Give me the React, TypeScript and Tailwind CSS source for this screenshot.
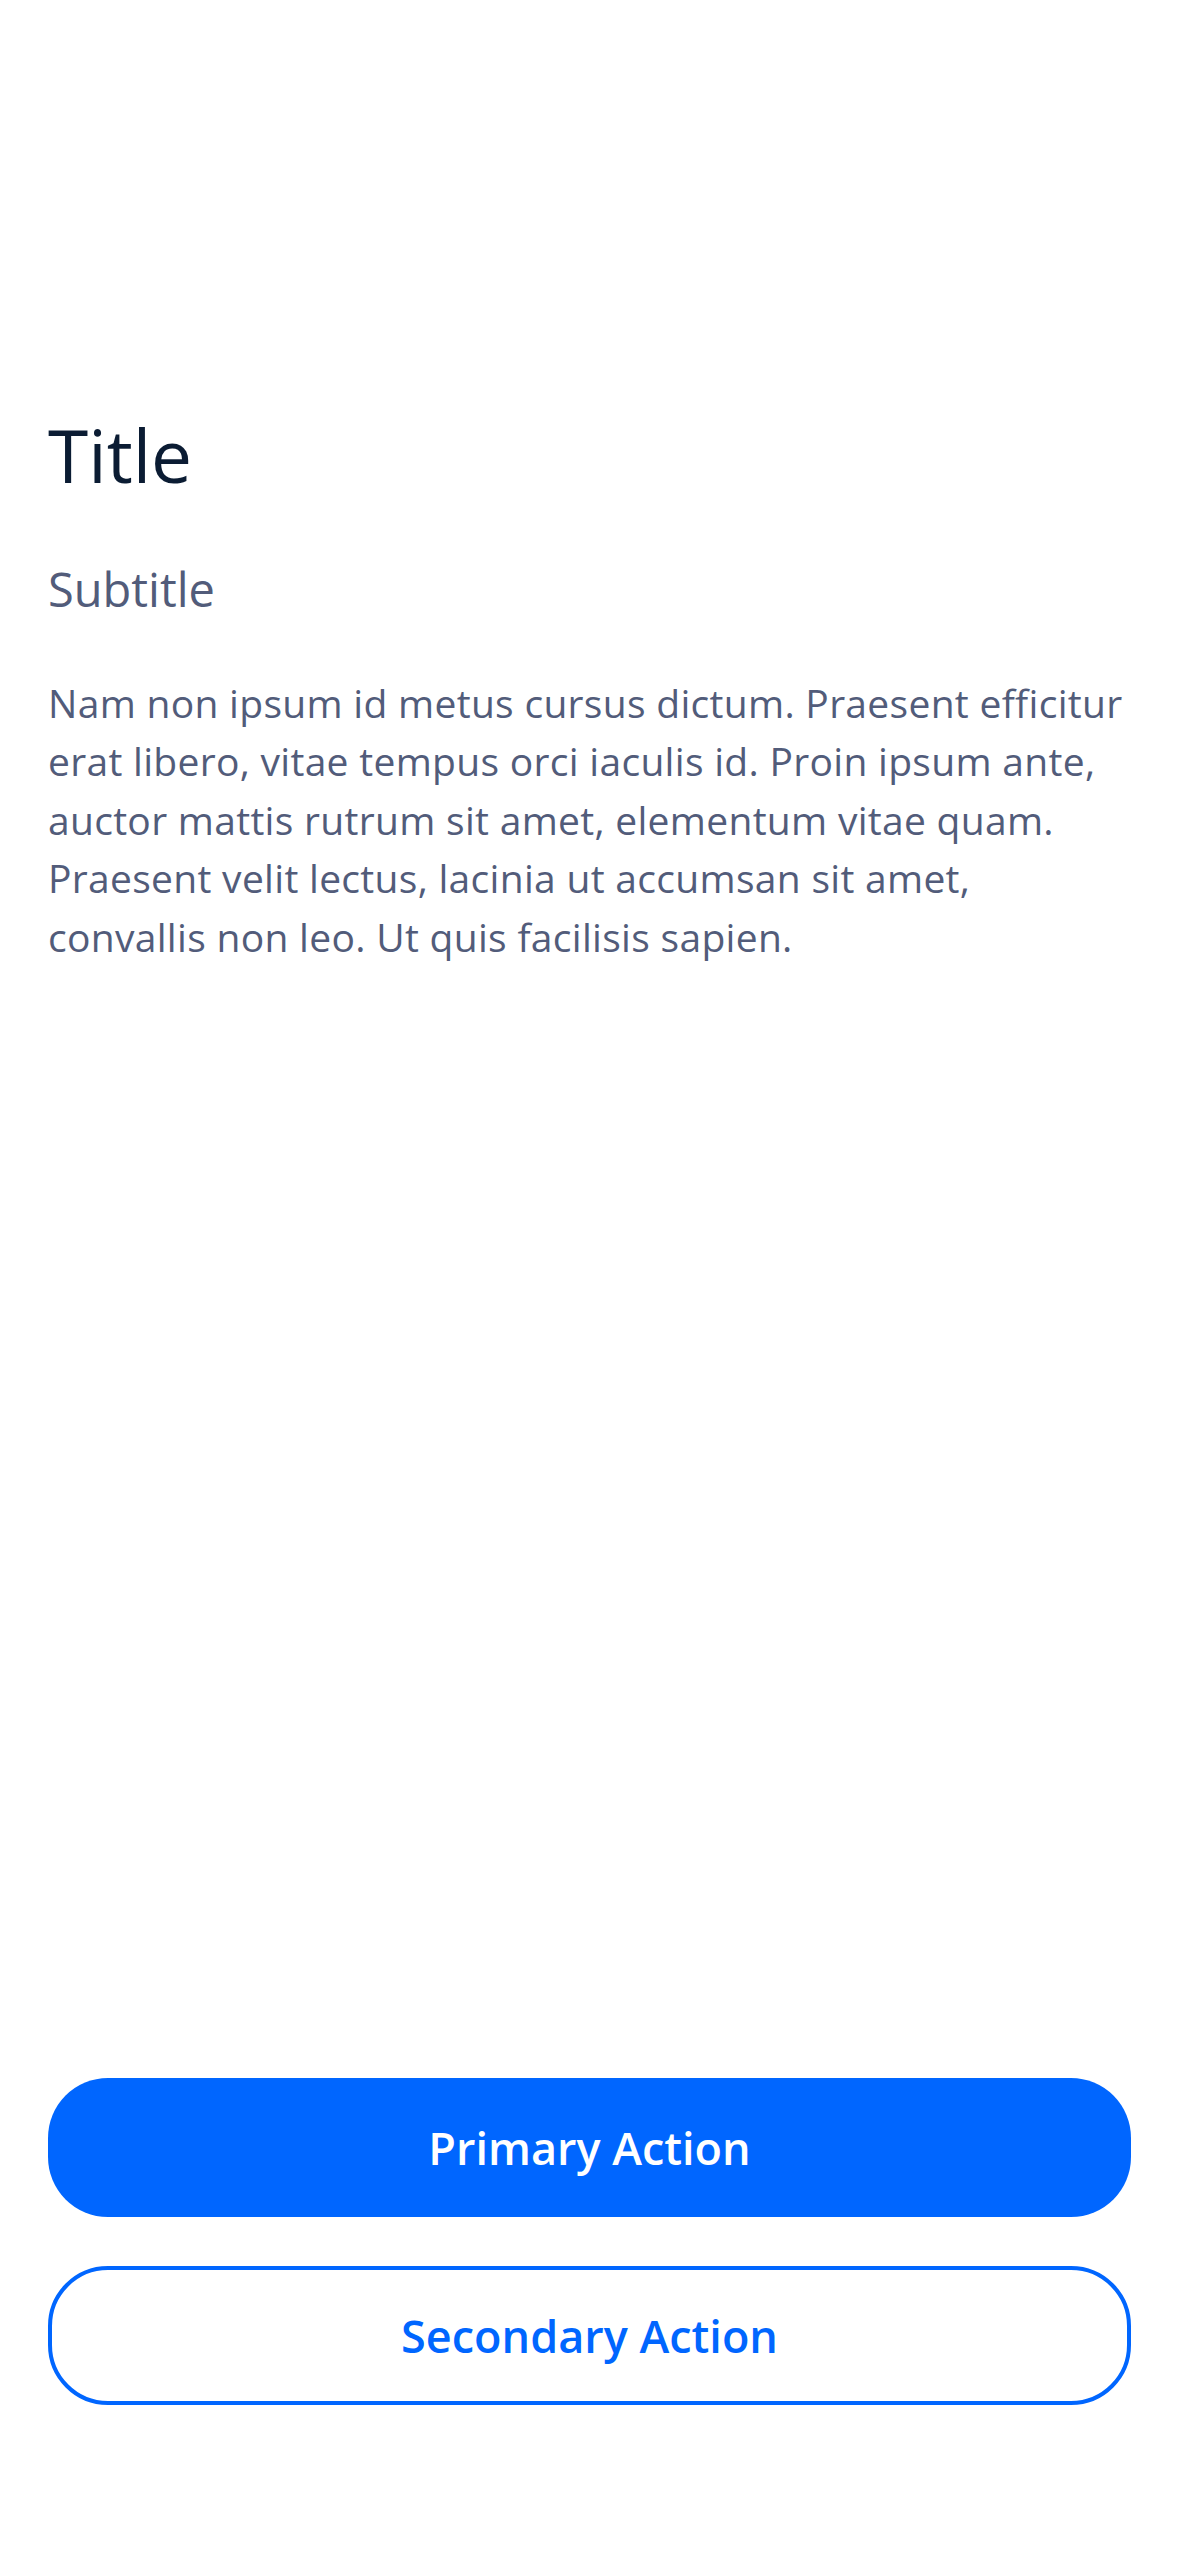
import React from "react";

const App: React.FC = () => {
    return (
        <div className="flex h-[2556px] w-full flex-col bg-white px-[48px] font-['Open_Sans',sans-serif]">
            <div className="pt-[411px]">
                <h1 className="text-[73px] leading-[1.2] font-normal text-[#0b1c33]">Title</h1>
                <h2 className="mt-[62px] text-[47px] leading-[1.2] font-normal text-[#525c7a]">Subtitle</h2>
                <p className="mt-[57px] text-[39px] leading-[58.5px] tracking-[0.3px] text-[#525c7a]">
                    Nam non ipsum id metus cursus dictum. Praesent efficitur erat libero, vitae tempus orci iaculis id. Proin ipsum ante, auctor mattis rutrum sit amet, elementum vitae quam. Praesent velit lectus, lacinia ut accumsan sit amet, convallis non leo. Ut quis facilisis sapien.
                </p>
            </div>
            <div className="flex-1" />
            <div className="flex flex-col gap-[49px] pb-[151px]">
                <button className="flex h-[139px] w-full items-center justify-center rounded-[60px] bg-[#0066ff] text-[45px] font-semibold text-white">
                    Primary Action
                </button>
                <button className="flex h-[139px] w-full items-center justify-center rounded-[60px] border-4 border-[#0066ff] bg-white text-[45px] font-semibold text-[#0066ff]">
                    Secondary Action
                </button>
            </div>
        </div>
    )
}

export default App;
